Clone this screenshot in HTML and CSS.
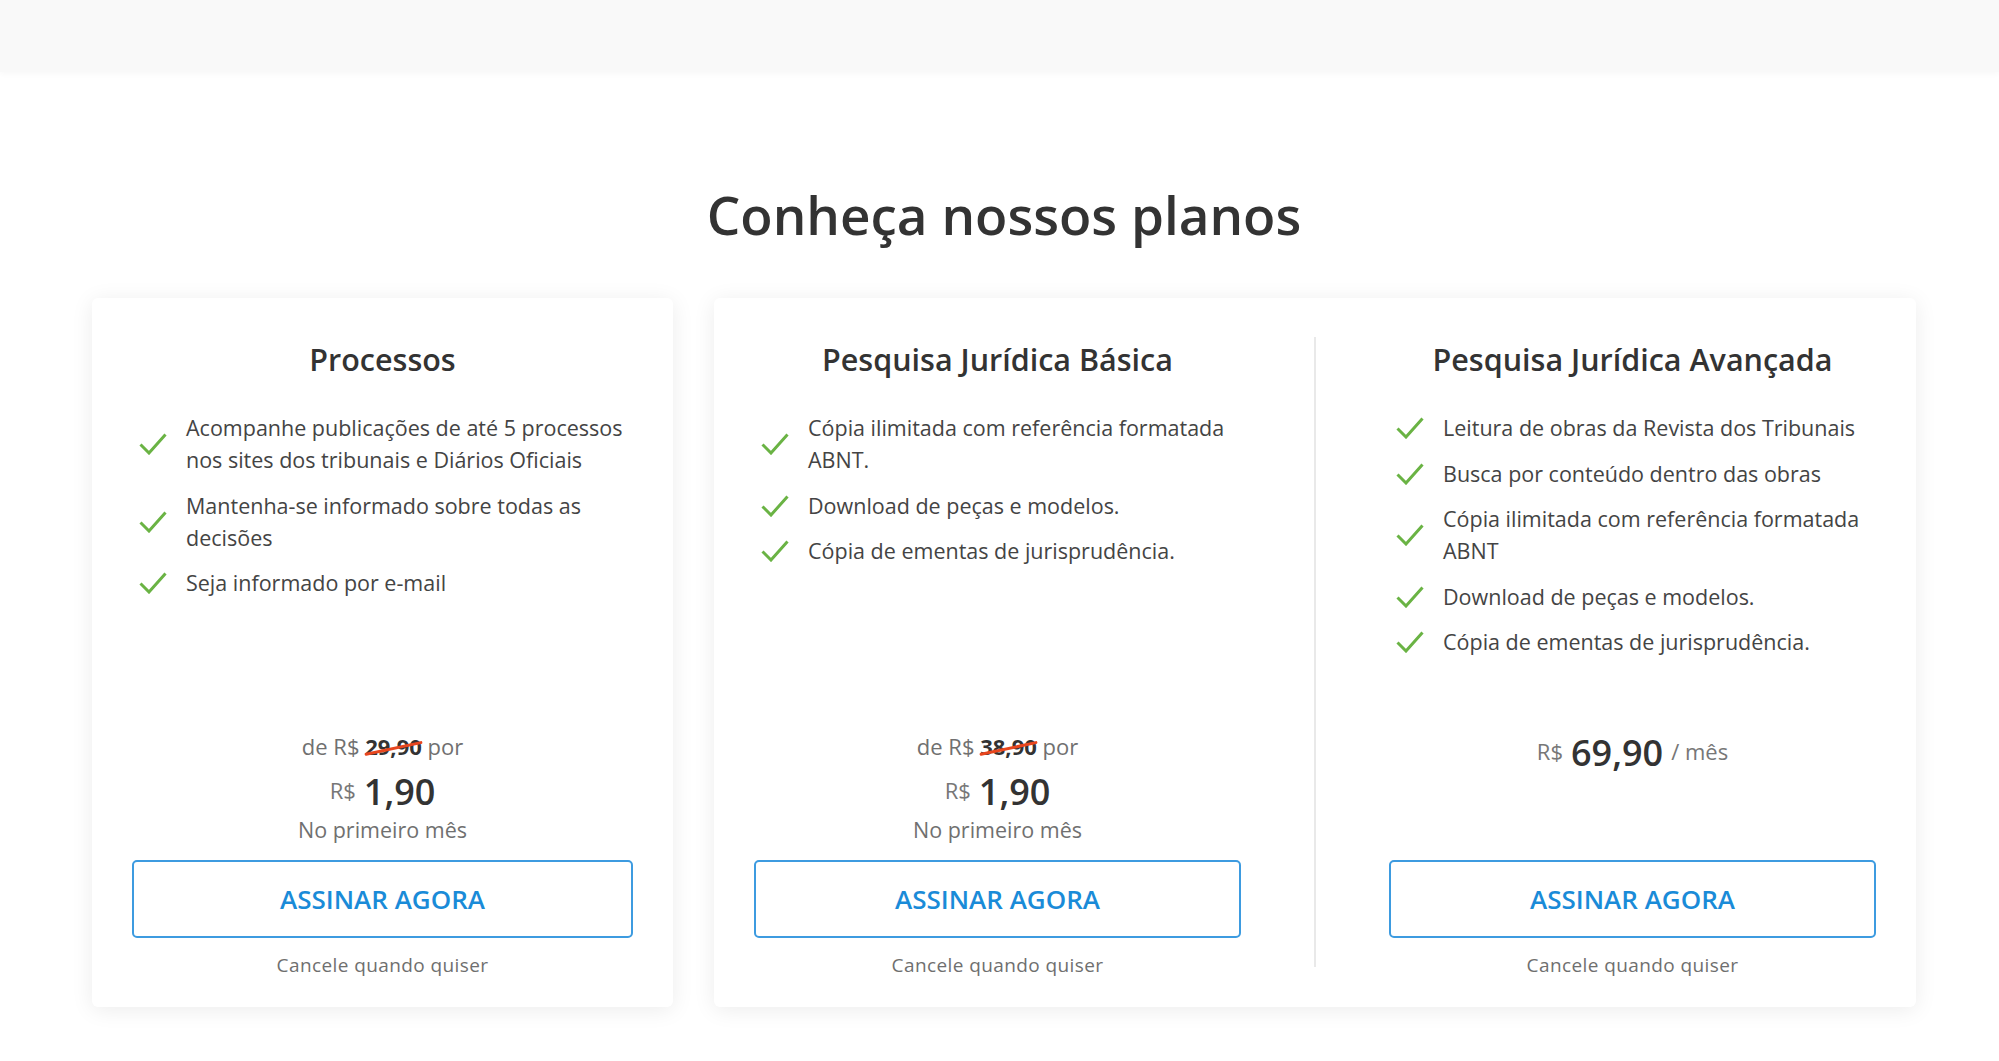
FILE: index.html
```html
<!DOCTYPE html>
<html lang="pt-BR">
<head>
<meta charset="utf-8">
<title>Conheça nossos planos</title>
<link rel="stylesheet" href="styles.css">
</head>
<body>
<header class="topbar"></header>
<main class="plans">
  <h1 class="plans-title">Conheça nossos planos</h1>
  <div class="plans-grid">
    <section class="card">
      <div class="plan">
        <h2 class="plan-name">Processos</h2>
        <ul class="features">
          <li><svg class="check" viewBox="0 0 28 22"><path d="M1.5 11.5 L10 20 L26.5 1.5"/></svg><span>Acompanhe publicações de até 5 processos nos sites dos tribunais e Diários Oficiais</span></li>
          <li><svg class="check" viewBox="0 0 28 22"><path d="M1.5 11.5 L10 20 L26.5 1.5"/></svg><span>Mantenha-se informado sobre todas as decisões</span></li>
          <li><svg class="check" viewBox="0 0 28 22"><path d="M1.5 11.5 L10 20 L26.5 1.5"/></svg><span>Seja informado por e-mail</span></li>
        </ul>
        <div class="price">
          <p class="price-from">de R$ <s class="old">29,90</s> por</p>
          <p class="price-now"><span class="cur">R$</span><span class="amount">1,90</span></p>
          <p class="price-note">No primeiro mês</p>
        </div>
        <a class="btn" href="#">ASSINAR AGORA</a>
        <p class="cancel">Cancele quando quiser</p>
      </div>
    </section>
    <section class="card card-double">
      <div class="plan">
        <h2 class="plan-name">Pesquisa Jurídica Básica</h2>
        <ul class="features">
          <li><svg class="check" viewBox="0 0 28 22"><path d="M1.5 11.5 L10 20 L26.5 1.5"/></svg><span>Cópia ilimitada com referência formatada ABNT.</span></li>
          <li><svg class="check" viewBox="0 0 28 22"><path d="M1.5 11.5 L10 20 L26.5 1.5"/></svg><span>Download de peças e modelos.</span></li>
          <li><svg class="check" viewBox="0 0 28 22"><path d="M1.5 11.5 L10 20 L26.5 1.5"/></svg><span>Cópia de ementas de jurisprudência.</span></li>
        </ul>
        <div class="price">
          <p class="price-from">de R$ <s class="old">38,90</s> por</p>
          <p class="price-now"><span class="cur">R$</span><span class="amount">1,90</span></p>
          <p class="price-note">No primeiro mês</p>
        </div>
        <a class="btn" href="#">ASSINAR AGORA</a>
        <p class="cancel">Cancele quando quiser</p>
      </div>
      <div class="divider"></div>
      <div class="plan">
        <h2 class="plan-name">Pesquisa Jurídica Avançada</h2>
        <ul class="features">
          <li><svg class="check" viewBox="0 0 28 22"><path d="M1.5 11.5 L10 20 L26.5 1.5"/></svg><span>Leitura de obras da Revista dos Tribunais</span></li>
          <li><svg class="check" viewBox="0 0 28 22"><path d="M1.5 11.5 L10 20 L26.5 1.5"/></svg><span>Busca por conteúdo dentro das obras</span></li>
          <li><svg class="check" viewBox="0 0 28 22"><path d="M1.5 11.5 L10 20 L26.5 1.5"/></svg><span>Cópia ilimitada com referência formatada ABNT</span></li>
          <li><svg class="check" viewBox="0 0 28 22"><path d="M1.5 11.5 L10 20 L26.5 1.5"/></svg><span>Download de peças e modelos.</span></li>
          <li><svg class="check" viewBox="0 0 28 22"><path d="M1.5 11.5 L10 20 L26.5 1.5"/></svg><span>Cópia de ementas de jurisprudência.</span></li>
        </ul>
        <div class="price price-solo">
          <p class="price-now"><span class="cur">R$</span><span class="amount">69,90</span><span class="per">/ mês</span></p>
        </div>
        <a class="btn" href="#">ASSINAR AGORA</a>
        <p class="cancel">Cancele quando quiser</p>
      </div>
    </section>
  </div>
</main>
</body>
</html>
```
FILE: styles.css
```css
html, body {
  margin: 0;
  padding: 0;
}

body {
  font-family: "Open Sans", "Noto Sans", sans-serif;
  background: #ffffff;
  color: #333333;
  padding-bottom: 40px;
}

.topbar {
  height: 72px;
  background: #f9f9f9;
  box-shadow: 0 2px 6px rgba(0, 0, 0, 0.03);
}

.plans {
  width: 1824px;
  margin-left: 92px;
}

.plans-title {
  margin: 111px 0 51px;
  font-size: 53px;
  line-height: 64px;
  font-weight: 600;
  text-align: center;
  color: #333333;
}

.plans-grid {
  display: grid;
  grid-template-columns: 581px 1202px;
  column-gap: 41px;
}

.card {
  background: #ffffff;
  border-radius: 6px;
  box-shadow: 0 3px 22px rgba(0, 0, 0, 0.08);
  padding: 40px 40px 29px;
  display: flex;
}

.card > .plan {
  flex: 1;
}

.card-double {
  display: grid;
  grid-template-columns: 1fr 2px 1fr;
  column-gap: 73px;
}

.divider {
  background: #e9e9e9;
  margin: -1px 0 11px;
}

.plan {
  display: flex;
  flex-direction: column;
  min-width: 0;
}

.plan-name {
  margin: 0;
  font-size: 30.5px;
  line-height: 42px;
  font-weight: 600;
  text-align: center;
  color: #333333;
}

.features {
  list-style: none;
  margin: 32px 0 72px;
  padding: 0;
  flex: 1;
  display: flex;
  flex-direction: column;
  gap: 13.5px;
}

.features li {
  display: flex;
  align-items: center;
  gap: 19px;
  font-size: 21.5px;
  line-height: 32px;
  color: #444444;
}

.check {
  flex: none;
  width: 28px;
  height: 22px;
  margin-left: 7px;
}

.check path {
  fill: none;
  stroke: #6ab344;
  stroke-width: 3;
}

.price {
  height: 116px;
  text-align: center;
}

.price p {
  margin: 0;
}

.price-solo {
  padding-top: 3px;
  box-sizing: border-box;
}

.price-from {
  font-size: 22px;
  line-height: 32px;
  color: #707070;
}

.old {
  position: relative;
  font-weight: 700;
  color: #333333;
  text-decoration: none;
}

.old::after {
  content: "";
  position: absolute;
  left: -1px;
  right: -1px;
  top: 52%;
  height: 3px;
  background: #e8461e;
  border-radius: 2px;
  transform: rotate(-12deg);
}

.price .price-now {
  margin-top: 10px;
  font-size: 36px;
  line-height: 40px;
}

.price-solo .price-now {
  margin-top: 0;
}

.cur,
.per {
  font-size: 22px;
  line-height: 1;
  color: #777777;
  vertical-align: 6px;
}

.cur {
  margin-right: 8px;
}

.per {
  margin-left: 8px;
}

.amount {
  font-weight: 600;
  color: #333333;
}

.price .price-note {
  margin-top: 2px;
  font-size: 21.5px;
  line-height: 32px;
  color: #707070;
}

.btn {
  display: block;
  box-sizing: border-box;
  height: 78px;
  margin-top: 14px;
  border: 2px solid #3d9be0;
  border-radius: 5px;
  color: #1a8bd8;
  font-size: 26px;
  font-weight: 600;
  line-height: 74px;
  text-align: center;
  text-decoration: none;
}

.cancel {
  margin: 14px 0 0;
  font-size: 19px;
  line-height: 26px;
  letter-spacing: 0.4px;
  color: #6f6f6f;
  text-align: center;
}
```
